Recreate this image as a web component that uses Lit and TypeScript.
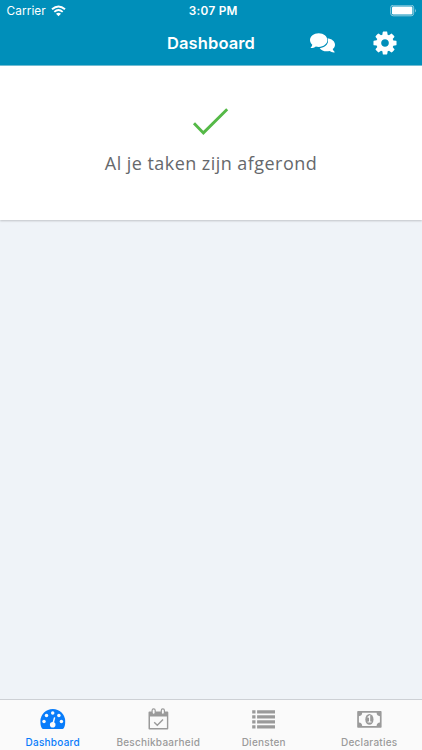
import { LitElement, html, css, svg } from "lit";
import { customElement, property } from "lit/decorators.js";

const icons = {
  dashboard: svg`
    <path fill="currentColor" d="M4.900 22.200Q3.400 20.200 3.400 15.200a12.400 12.300 0 0 1 24.800 0q0 5-1.500 7-.5.7-1.200.7H6.100q-.8 0-1.200-.7Z"/>
    <g fill="#fafafa"><circle cx="7" cy="15.600" r="1.750"/><circle cx="9.500" cy="9.500" r="1.750"/><circle cx="15.700" cy="7.100" r="1.750"/><circle cx="21.900" cy="9.600" r="1.750"/><circle cx="24.400" cy="15.600" r="1.750"/><circle cx="15.700" cy="18.700" r="2.800"/></g>
    <path d="M15.900 18 17.500 11.900" stroke="#fafafa" stroke-width="1.500" stroke-linecap="round"/>`,
  calendar: svg`
    <path fill="currentColor" fill-rule="evenodd" d="M6.500 5.500h17.800q1 0 1 1v16.100q0 1-1 1H6.500q-1 0-1-1V6.500q0-1 1-1Zm.5 5v11.600h16.900V10.500Z"/>
    <g fill="#fafafa" stroke="currentColor" stroke-width="1.200"><rect x="9.100" y="2.900" width="3.100" height="5.400" rx="1.500"/><rect x="18.300" y="2.900" width="3.100" height="5.400" rx="1.500"/></g>
    <path d="m11.200 16.200 3.100 3.100 5.700-5.700" fill="none" stroke="currentColor" stroke-width="1.400"/>`,
  list: svg`<path fill="currentColor" d="M4.200 4.200h3.300v3.200H4.200Zm4.900 0h17.900v3.200H9.100ZM4.200 9.200h3.300v3.200H4.200Zm4.900 0h17.900v3.200H9.100ZM4.200 14.200h3.300v3.200H4.200Zm4.900 0h17.900v3.200H9.100ZM4.200 19.200h3.300v3.200H4.200Zm4.900 0h17.900v3.200H9.100Z"/>`,
  money: svg`
    <path fill="currentColor" fill-rule="evenodd" d="M4 5.100h22.800q.8 0 .8.800v15q0 .8-.8.800H4q-.8 0-.8-.8v-15q0-.8.800-.8ZM8.200 6.800Q8 10 4.900 10.200v6.300q3.100.2 3.300 3.500h14.400q.2-3.300 3.300-3.500v-6.300Q22.800 10 22.600 6.800Z"/>
    <ellipse cx="15.400" cy="13.400" rx="4.100" ry="5.400" fill="currentColor"/>
    <path d="m13.700 11.500 1.900-1.500v6m-2 0h3.900" fill="none" stroke="#fafafa" stroke-width="1.200"/>`,
};

@customElement("status-bar")
class StatusBar extends LitElement {
  static styles = css`
    :host { display: grid; grid-template-columns: 1fr auto 1fr; align-items: center; height: 22px; padding: 0 5px 0 6.500px; font-size: 11.800px; line-height: 22px; }
    .left { display: flex; align-items: center; gap: 5px; letter-spacing: .1px; }
    .time { font-weight: 600; letter-spacing: .25px; padding-left: 3px; }
    .battery { justify-self: end; }
    svg { display: block; }
  `;
  render() {
    return html`
      <div class="left"><span>Carrier</span>
        <svg width="15" height="12" viewBox="0 0 15 12" fill="none" stroke="#fff" stroke-width="1.900">
          <path d="M1 4.300Q7.500-1.500 14 4.300M3.300 6.900q4.200-3.600 8.400 0"/><path d="M5 8.700q2.500-1.900 5 0L7.500 11.200Z" fill="#fff" stroke="none"/>
        </svg></div>
      <span class="time">3:07 PM</span>
      <svg class="battery" width="27" height="12" viewBox="0 0 27 12">
        <rect x=".7" y=".2" width="23" height="10.600" rx="2.500" fill="none" stroke="#8fcde0"/>
        <rect x="2" y="1.500" width="20.400" height="8" rx="1.200" fill="#fff"/><path d="M25 3.500q1.600 2 0 4Z" fill="#8fcde0"/>
      </svg>`;
  }
}

@customElement("nav-header")
class NavHeader extends LitElement {
  static styles = css`
    :host { display: grid; grid-template-columns: 1fr auto 1fr; align-items: center; height: 42px; }
    h1 { grid-column: 2; margin: 0; font: 600 16.500px/42px Inter, sans-serif; letter-spacing: .1px; }
    .actions { display: flex; justify-content: flex-end; gap: 37px; padding-right: 25px; }
    svg { display: block; }
  `;
  render() {
    return html`<h1>Dashboard</h1>
      <div class="actions">
        <svg width="27" height="24" viewBox="0 0 27 24" fill="#fff">
          <path d="M17.800 7.200C23 7.600 26 10.300 26 13.800c0 1.700-.9 3.200-2.300 4.300.3 1 .9 1.800 1.800 2.600.3.300.1.700-.3.700-1.700.1-3.300-.4-4.600-1.400-4.300 1-8.100-.2-9.900-2.800 5.100-.5 8.700-3.900 8.300-7.900-.1-.8-.6-1.500-1.200-2.100Z"/>
          <path d="M9.700 2.200C14.700 2.200 18.400 5.200 18.400 9s-3.700 6.900-8.700 6.900c-1 0-2-.1-2.900-.4-1.300 1-3 1.600-4.700 1.600-.4 0-.6-.4-.3-.7.8-.8 1.300-1.600 1.500-2.700C1.800 12.500 1 10.800 1 9c0-3.800 3.700-6.800 8.700-6.800Z" stroke="#008fba" stroke-width="1.200" paint-order="stroke"/>
        </svg>
        <svg width="24" height="24" viewBox="96 96 1600 1600" fill="#fff"><path d="M1152 896q0-106-75-181t-181-75-181 75-75 181 75 181 181 75 181-75 75-181zm512-109v222q0 12-8 23t-20 13l-185 28q-19 54-39 91 35 50 107 138 10 12 10 25t-9 23q-27 37-99 108t-94 71q-12 0-26-9l-138-108q-44 23-91 38-16 136-29 186-7 28-36 28h-222q-14 0-24.500-8.500t-11.500-21.500l-28-184q-49-16-90-37l-141 107q-10 9-25 9-14 0-25-11-126-114-165-168-7-10-7-23 0-12 8-23 15-21 51-66.500t54-70.500q-27-50-41-99l-183-27q-13-2-21-12.500t-8-23.500v-222q0-12 8-23t19-13l186-28q14-46 39-92-40-57-107-138-10-12-10-24 0-10 9-23 26-36 98.500-107.500t94.500-71.500q13 0 26 10l138 107q44-23 91-38 16-136 29-186 7-28 36-28h222q14 0 24.500 8.500t11.500 21.500l28 184q49 16 90 37l142-107q9-9 24-9 13 0 25 10 129 119 165 170 7 8 7 22 0 12-8 23-15 21-51 66.500t-54 70.500q26 50 41 98l183 28q13 2 21 12.500t8 23.500z"/></svg>
      </div>`;
  }
}

@customElement("tab-item")
class TabItem extends LitElement {
  @property() icon: keyof typeof icons = "dashboard";
  @property() label = "";
  static styles = css`
    :host { display: flex; flex-direction: column; align-items: center; color: #9a9a9a; }
    :host([active]) { color: #087cfa; }
    svg { display: block; margin-top: 6px; }
    span { font-size: 10px; font-weight: 500; line-height: 14px; letter-spacing: .25px; margin-top: 3px; white-space: nowrap; }
  `;
  render() {
    return html`<svg width="31" height="26" viewBox="0 0 31 26">${icons[this.icon]}</svg><span>${this.label}</span>`;
  }
}

@customElement("app-root")
class AppRoot extends LitElement {
  static styles = css`
    :host { display: flex; flex-direction: column; height: 100vh; background: #eff3f8; font-family: Inter, "Liberation Sans", sans-serif; }
    header { height: 65px; flex: none; background: #008fba; color: #fff; border-bottom: 1px solid #73bfd5; }
    .card { height: 154px; flex: none; display: flex; flex-direction: column; align-items: center; background: #fff; box-shadow: 0 1px 2px #0003; }
    .check { display: block; margin-top: 40px; }
    p { margin: 12px 0 0; font: 400 18px/26px "Open Sans", sans-serif; letter-spacing: .45px; color: #66686c; }
    nav { display: grid; grid-template-columns: repeat(4, 1fr); height: 50px; margin-top: auto; border-top: 1px solid #cdd0d5; background: #fafafa; }
  `;
  render() {
    return html`
      <header><status-bar></status-bar><nav-header></nav-header></header>
      <section class="card">
        <svg class="check" width="38" height="32" viewBox="0 0 38 32"><path d="m2 17.200 9.400 9.700L35.200 3.300" fill="none" stroke="#55b947" stroke-width="2.900"/></svg>
        <p>Al je taken zijn afgerond</p>
      </section>
      <nav>
        <tab-item active icon="dashboard" label="Dashboard"></tab-item>
        <tab-item icon="calendar" label="Beschikbaarheid"></tab-item>
        <tab-item icon="list" label="Diensten"></tab-item>
        <tab-item icon="money" label="Declaraties"></tab-item>
      </nav>`;
  }
}
